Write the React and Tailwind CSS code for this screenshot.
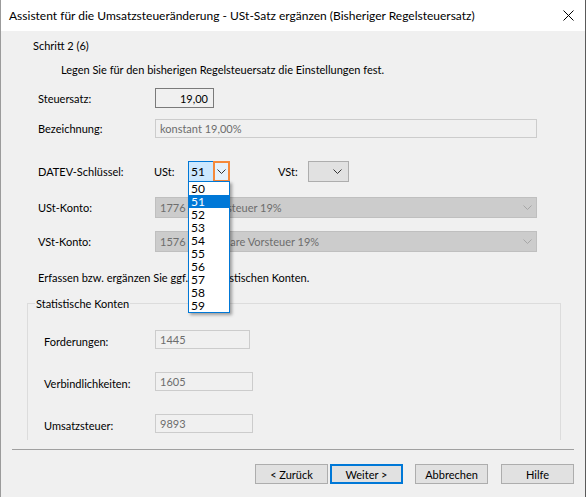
const Chevron = ({ className = "" }) => (
  <svg width="9" height="5" viewBox="0 0 9 5" className={className}>
    <path d="M0.5 0.5 L4.5 4.5 L8.5 0.5" fill="none" stroke="currentColor" strokeWidth="1" />
  </svg>
);

const TextBox = ({ value, width, className = "" }) => (
  <div
    className={`h-[19px] flex items-center pl-[4px] border border-[#cccccc] bg-[#f0f0f0] text-[#6d6d6d] ${width} ${className}`}
  >
    {value}
  </div>
);

const DisabledCombo = ({ nr, text }) => (
  <div className="w-[382px] h-[21px] flex items-center pl-[4px] pr-[4px] border border-[#bfbfbf] bg-[#cccccc] text-[#6d6d6d]">
    <span className="w-[31px]">{nr}</span>
    <span className="flex-1">{text}</span>
    <Chevron className="text-[#a6a6a6]" />
  </div>
);

const Button = ({ children, primary, className = "" }) => (
  <button
    className={`w-[73px] h-[20px] flex items-center justify-center bg-[#e1e1e1] ${
      primary ? "border-2 border-[#0078d7]" : "border border-[#adadad]"
    } ${className}`}
  >
    {children}
  </button>
);

const keys = ["50", "51", "52", "53", "54", "55", "56", "57", "58", "59"];

export default function App() {
  return (
    <div className="relative w-[586px] h-[497px] overflow-hidden flex flex-col bg-[#f0f0f0] border-l border-l-[#9b9b9b] border-r border-r-[#5a5a5a] font-[Lato,'Liberation_Sans',sans-serif] text-[11px] leading-[15px] text-black">
      {/* Titelleiste */}
      <div className="h-[31px] shrink-0 bg-white flex items-center justify-between pl-[8px] pr-[11px] text-[12px]">
        <span>Assistent für die Umsatzsteueränderung - USt-Satz ergänzen (Bisheriger Regelsteuersatz)</span>
        <svg width="11" height="11" viewBox="0 0 11 11">
          <path d="M0.5 0.5 L10.5 10.5 M10.5 0.5 L0.5 10.5" stroke="#000" strokeWidth="1" />
        </svg>
      </div>

      <div className="mt-[7px] ml-[32px] h-[15px]">Schritt 2 (6)</div>
      <div className="mt-[9px] ml-[60px] h-[15px]">
        Legen Sie für den bisherigen Regelsteuersatz die Einstellungen fest.
      </div>

      <div className="mt-[11px] ml-[37px] h-[20px] flex items-center">
        <span className="w-[117px]">Steuersatz:</span>
        <div className="w-[59px] h-[20px] flex items-center justify-end pr-[5px] border border-[#7a7a7a] bg-[#f0f0f0]">
          19,00
        </div>
      </div>

      <div className="mt-[11px] ml-[37px] h-[18px] flex items-center">
        <span className="w-[117px]">Bezeichnung:</span>
        <TextBox value="konstant 19,00%" width="w-[382px]" className="h-[18px]" />
      </div>

      <div className="mt-[24px] ml-[37px] h-[21px] flex items-center">
        <span className="w-[116px]">DATEV-Schlüssel:</span>
        <span className="w-[34px]">USt:</span>
        <div className="flex h-[21px] text-[12px]">
          <div className="w-[25px] flex items-center pl-[2px] border border-r-0 border-[#0078d7] bg-[#cce8ff]">51</div>
          <div className="w-[17px] flex items-center justify-center border-2 border-[#f5893a] bg-[#e5f1fb] text-[#333]">
            <Chevron />
          </div>
        </div>
        <span className="ml-[48px] w-[30px]">VSt:</span>
        <div className="w-[41px] h-[21px] flex items-center justify-end pr-[6px] border border-[#adadad] bg-[#e1e1e1] text-[#333]">
          <Chevron />
        </div>
      </div>

      <div className="mt-[15px] ml-[37px] h-[21px] flex items-center">
        <span className="w-[117px]">USt-Konto:</span>
        <DisabledCombo nr="1776" text="Umsatzsteuer 19%" />
      </div>

      <div className="mt-[13px] ml-[37px] h-[21px] flex items-center">
        <span className="w-[117px]">VSt-Konto:</span>
        <DisabledCombo nr="1576" text="Abziehbare Vorsteuer 19%" />
      </div>

      <div className="mt-[18px] ml-[37px] h-[15px]">
        Erfassen bzw. ergänzen Sie ggf. die statistischen Konten.
      </div>

      {/* Gruppe Statistische Konten */}
      <div className="relative mt-[18px] ml-[26px] w-[534px] h-[137px] shrink-0 border-t border-l border-r border-[#dcdcdc] pl-[16px] flex flex-col">
        <span className="absolute -top-[8px] left-[7px] px-[1px] bg-[#f0f0f0]">Statistische Konten</span>
        <div className="mt-[26px] flex items-start">
          <span className="w-[111px] pt-[4px]">Forderungen:</span>
          <TextBox value="1445" width="w-[95px]" />
        </div>
        <div className="mt-[23px] flex items-start">
          <span className="w-[111px] pt-[4px]">Verbindlichkeiten:</span>
          <TextBox value="1605" width="w-[98px]" />
        </div>
        <div className="mt-[23px] flex items-start">
          <span className="w-[111px] pt-[4px]">Umsatzsteuer:</span>
          <TextBox value="9893" width="w-[98px]" />
        </div>
      </div>

      <div className="mt-[9px] ml-[11px] w-[562px] h-[1px] shrink-0 bg-[#a0a0a0]" />

      <div className="mt-[14px] ml-[254px] flex">
        <Button>&lt; Zurück</Button>
        <Button primary className="ml-[2px]">Weiter &gt;</Button>
        <Button className="ml-[12px]">Abbrechen</Button>
        <Button className="ml-[13px]">Hilfe</Button>
      </div>

      {/* aufgeklappte Liste */}
      <div className="absolute left-[187px] top-[181px] w-[42px] border border-[#0078d7] bg-white text-[12px] shadow-[2px_2px_3px_rgba(0,0,0,0.35)]">
        {keys.map((k) => (
          <div
            key={k}
            className={`h-[13px] leading-[13px] pl-[2px] ${k === "51" ? "bg-[#0078d7] text-white" : ""}`}
          >
            {k}
          </div>
        ))}
      </div>
    </div>
  );
}
